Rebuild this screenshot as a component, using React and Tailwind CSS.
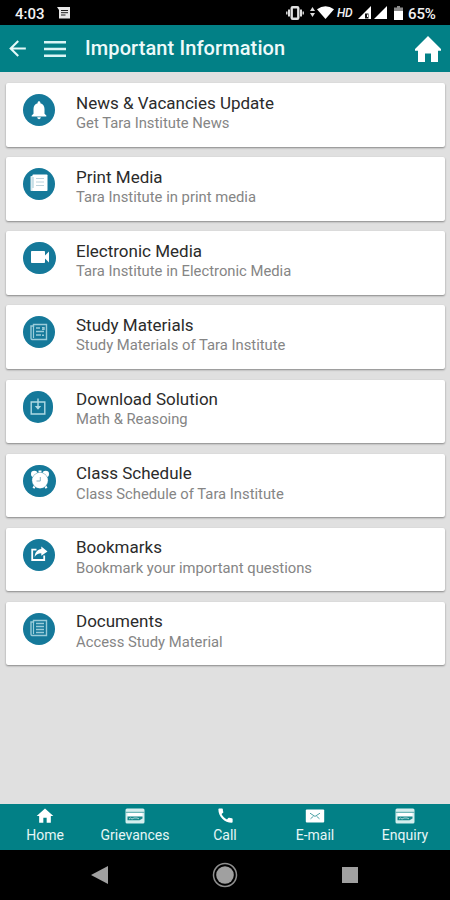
import { MdArrowBack, MdHome, MdNotifications, MdVideocam, MdCall } from 'react-icons/md'

const ITEMS = [
    { title: 'News & Vacancies Update', subtitle: 'Get Tara Institute News', icon: BellIcon },
    { title: 'Print Media', subtitle: 'Tara Institute in print media', icon: PaperIcon },
    { title: 'Electronic Media', subtitle: 'Tara Institute in Electronic Media', icon: VideoIcon, badge: 'w-[33px]' },
    { title: 'Study Materials', subtitle: 'Study Materials of Tara Institute', icon: BookIcon },
    { title: 'Download Solution', subtitle: 'Math & Reasoing', icon: DownloadIcon, badge: 'w-[30px]' },
    { title: 'Class Schedule', subtitle: 'Class Schedule of Tara Institute', icon: AlarmIcon, badge: 'w-[33px]' },
    { title: 'Bookmarks', subtitle: 'Bookmark your important questions', icon: ShareIcon },
    { title: 'Documents', subtitle: 'Access Study Material', icon: DocumentIcon }
]

const TABS = [
    { label: 'Home', icon: HomeIcon },
    { label: 'Grievances', icon: CardIcon },
    { label: 'Call', icon: PhoneIcon },
    { label: 'E-mail', icon: MailIcon },
    { label: 'Enquiry', icon: CardIcon }
]

function BellIcon() {
    return <MdNotifications className="w-[22px] h-[22px] mb-[1px] text-white" />
}

function VideoIcon() {
    return <MdVideocam className="w-6 h-6 mb-[2px] text-white" />
}

function PaperIcon() {
    return (
        <svg viewBox="0 0 18 18" className="w-[18px] h-[18px] mb-[2px]">
            <rect x="0.5" y="2" width="3" height="15" rx="0.8" fill="#dcebf0" />
            <rect x="2.5" y="0.5" width="15" height="16.5" rx="0.8" fill="#fff" />
            <path d="M3 3v11" stroke="#8cbccb" strokeWidth="0.8" />
            <path d="M6 4.5h8M6 8h8M6 11.5h8" stroke="#bcd3dc" strokeWidth="1" />
        </svg>
    )
}

function BookIcon() {
    return (
        <svg viewBox="0 0 18 18" className="w-[18px] h-[18px]" fill="none" stroke="#9accd9">
            <path d="M3.5 1.5h13v15h-14.5q-1 0-1-1.5V3h2.5z" strokeWidth="1.4" />
            <path d="M3.5 3v12" strokeWidth="1.2" />
            <path d="M6 5h4M6 8.5h8M6 12h5M12 4.8h2v1.6h-2M12 12.3h2" strokeWidth="1.4" />
        </svg>
    )
}

function DocumentIcon() {
    return (
        <svg viewBox="0 0 18 18" className="w-[18px] h-[18px] mb-[1px]" fill="none" stroke="#9accd9">
            <path d="M3.5 1.5h13v15h-14.5q-1 0-1-1.5V3h2.5z" strokeWidth="1.4" />
            <path d="M3.5 3v12" strokeWidth="1.2" />
            <path d="M6 4.5h8M6 7.5h8M6 10.5h8M6 13.5h8" strokeWidth="1.3" />
        </svg>
    )
}

function DownloadIcon() {
    return (
        <svg viewBox="0 0 18 18" className="w-[18px] h-[18px]" fill="none" stroke="#b0dae4" strokeWidth="1.4">
            <path d="M2.2 4h13.6v12H2.2zM9 0.5v10" />
            <path d="M5.8 8h6.4L9 11.8z" fill="#b0dae4" stroke="none" />
        </svg>
    )
}

function AlarmIcon() {
    return (
        <svg viewBox="0 0 20 20" className="w-5 h-5 mb-[2px]">
            <path d="M5 15.5l-1.5 2.8M15 15.5l1.5 2.8" stroke="#fff" strokeWidth="2.2" />
            <circle cx="4.3" cy="4" r="3.3" fill="#fff" />
            <circle cx="15.7" cy="4" r="3.3" fill="#fff" />
            <rect x="8.5" y="0.5" width="3" height="3" fill="#fff" />
            <circle cx="10" cy="10.5" r="8.2" fill="#5ba0b7" />
            <circle cx="10" cy="10.5" r="7.8" fill="#fff" />
            <path d="M10.3 7v4H6.5" fill="none" stroke="#8ab4c4" strokeWidth="1" />
        </svg>
    )
}

function ShareIcon() {
    return (
        <svg viewBox="0 0 18 16" className="w-[18px] h-4 mb-[1px]">
            <path d="M6.5 3.7H2.2v10.3h12V9.5" fill="none" stroke="#fff" strokeWidth="1.8" />
            <path d="M11.3 0.5l6.2 4.9-6.2 4.4V7.2C8 7.2 6.2 8.4 4.7 11 4.9 6.5 7.5 3.4 11.3 3.1z" fill="#fff" />
        </svg>
    )
}

function HomeIcon() {
    return <MdHome className="w-5 h-5 text-white" />
}

function PhoneIcon() {
    return <MdCall className="w-[19px] h-[19px] text-white" />
}

function CardIcon() {
    return (
        <svg viewBox="0 0 20 16" className="w-5 h-4">
            <rect x="0.5" y="0.5" width="19" height="15" rx="1.5" fill="#d5eeee" />
            <path d="M0.5 4.3h19" stroke="#54a9aa" strokeWidth="1" />
            <rect x="2.5" y="5" width="15" height="3.5" fill="#fff" />
            <path d="M2.5 8.5h15v2l-3 1.8h-12z" fill="#17888b" />
            <path d="M4 11l1.5-1 1.5 1 2-1h3l2 .8" stroke="#b5dfdf" fill="none" strokeWidth="0.9" />
        </svg>
    )
}

function MailIcon() {
    return (
        <svg viewBox="0 0 20 14" className="w-5 h-3.5">
            <rect x="0.8" y="0.5" width="18.4" height="13" rx="1" fill="#fff" />
            <path d="M5 4.2l5 3.2 5-3.2M5.5 9.8l3-2.6M14.5 9.8l-3-2.6" fill="none" stroke="#4da3a6" strokeWidth="1" />
        </svg>
    )
}

function StatusBar() {
    return (
        <div className="h-[25px] shrink-0 bg-black text-[#f2f2f2] flex items-center pl-[15px] pr-[14px]">
            <span className="w-[30px] text-[15px] leading-none font-medium whitespace-nowrap pt-[3px]">4:03</span>
            <svg viewBox="0 0 13 12" className="w-[13px] h-3 ml-3">
                <path d="M0 0h13v11.5H2V3z" fill="#e8e8e8" />
                <path d="M4 3.5h7M4 5.7h7M4 8h4.5" stroke="#222" strokeWidth="1" />
            </svg>
            <div className="flex-1" />
            <svg viewBox="0 0 18 14" className="w-[18px] h-3.5" fill="none" stroke="#e0e0e0">
                <rect x="5.7" y="1.3" width="6.6" height="11.4" rx="1" strokeWidth="2.4" />
                <path d="M3 3.5v7M15 3.5v7" strokeWidth="2" />
                <path d="M0.8 5.5v3M17.2 5.5v3" strokeWidth="1.4" />
            </svg>
            <svg viewBox="0 0 5 10" className="w-[5px] h-2.5 ml-[6px] mb-[2px]" fill="#ddd">
                <path d="M2.5 0L5 4H0zM2.5 10L5 6H0z" />
            </svg>
            <svg viewBox="0 0 17 13" className="w-[17px] h-[13px] ml-[2px]" fill="#fff">
                <path d="M0 3.2Q8.5-2.8 17 3.2L8.5 13z" />
            </svg>
            <span className="w-4 ml-[3px] pt-[1px] text-[12px] leading-none font-medium italic tracking-[-0.3px] whitespace-nowrap">
                HD
            </span>
            <svg viewBox="0 0 13 13" className="w-[13px] h-[13px] ml-[5px]">
                <path d="M13 0v13H0z" fill="#fff" />
                <path d="M7 7.5h3.5v5H7z" fill="#111" />
                <path d="M9.5 8.5v2.5" stroke="#fff" strokeWidth="1" />
            </svg>
            <svg viewBox="0 0 13 13" className="w-[13px] h-[13px] ml-[3px]">
                <path d="M13 0v13H0z" fill="#fff" />
            </svg>
            <svg viewBox="0 0 9 14" className="w-[9px] h-3.5 ml-[7px]">
                <path d="M3 0h3v1.5h3V5H0V1.5h3z" fill="#8a8a8a" />
                <path d="M0 5h9v9H0z" fill="#fff" />
            </svg>
            <span className="w-7 ml-[5px] text-[15px] leading-none font-medium whitespace-nowrap tracking-[-0.1px] pt-[3px]">65%</span>
        </div>
    )
}

function AppBar() {
    return (
        <div className="h-[46.5px] shrink-0 bg-[#028086] text-white flex items-center pl-[5px] pr-[9px]">
            <MdArrowBack className="w-[25px] h-[25px] shrink-0 text-[#e4f8f8]" />
            <svg viewBox="0 0 22 16" className="w-[22px] h-4 ml-[14px] mt-[1px]" stroke="#d9f5f5" strokeWidth="2.5">
                <path d="M0 1.25h22M0 8h22M0 14.75h22" />
            </svg>
            <h1 className="ml-[19px] flex-1 text-[20px] leading-none font-medium tracking-[0.1px] whitespace-nowrap text-[#eefafa]">
                Important Information
            </h1>
            <svg viewBox="0 0 26 26" className="w-[26px] h-[26px] mt-[1px]" fill="#fff">
                <path d="M13 0L26 13v1.8h-3V26h-7v-8.500h-6V26H3V14.800H0V13z" />
            </svg>
        </div>
    )
}

function ListCard({ title, subtitle, icon: Icon, badge = 'w-8' }) {
    return (
        <div className="h-[63.5px] shrink-0 bg-white rounded-[2px] shadow-[0_1px_2px_rgba(0,0,0,0.4)] flex items-start pl-[17px]">
            <div className="w-[53px] pt-[11px] shrink-0">
                <div className={`${badge} h-8 rounded-full bg-[#15799a] flex items-center justify-center`}>
                    <Icon />
                </div>
            </div>
            <div className="pt-[9.5px] whitespace-nowrap">
                <div className="text-[17px] leading-[20px] text-[#2b2b2b]">{title}</div>
                <div className="mt-[0.4px] text-[14.8px] leading-[20px] text-[#858585]">{subtitle}</div>
            </div>
        </div>
    )
}

function TabBar() {
    return (
        <div className="h-[46px] shrink-0 bg-[#028086] grid grid-cols-5 text-[#e6f6f6]">
            {TABS.map(({ label, icon: Icon }) => (
                <div key={label} className="flex flex-col items-center">
                    <div className="h-[23px] flex items-center justify-center">
                        <Icon />
                    </div>
                    <span className="text-[14px] leading-[17px]">{label}</span>
                </div>
            ))}
        </div>
    )
}

function NavBar() {
    return (
        <div className="h-[50px] shrink-0 bg-black flex items-center justify-between pl-[91px] pr-[92px]">
            <svg viewBox="0 0 17 18" className="w-[17px] h-[18px]" fill="#a0a0a0">
                <path d="M17 0v18L0 9z" />
            </svg>
            <svg viewBox="0 0 26 26" className="w-[26px] h-[26px]">
                <circle cx="13" cy="13" r="11.5" fill="none" stroke="#8e8e8e" strokeWidth="1.5" />
                <circle cx="13" cy="13" r="8.8" fill="#a0a0a0" />
            </svg>
            <div className="w-4 h-4 bg-[#a0a0a0]" />
        </div>
    )
}

function App() {
    return (
        <div className="w-[450px] h-[900px] flex flex-col overflow-hidden bg-[#e0e0e0] font-['Roboto',sans-serif]">
            <StatusBar />
            <AppBar />
            <div className="flex-1 min-h-0 flex flex-col gap-[10.65px] pt-[11.5px] pl-[6px] pr-[5px]">
                {ITEMS.map((item) => (
                    <ListCard key={item.title} {...item} />
                ))}
            </div>
            <TabBar />
            <NavBar />
        </div>
    )
}

export default App
